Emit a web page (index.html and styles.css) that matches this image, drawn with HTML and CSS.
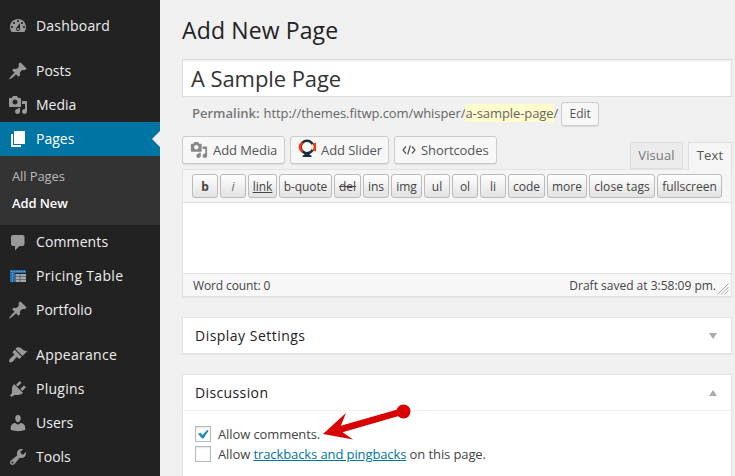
FILE: index.html
```html
<!DOCTYPE html>
<html lang="en">
<head>
<meta charset="utf-8">
<title>Add New Page</title>
<link rel="stylesheet" href="styles.css">
</head>
<body>
<div class="admin">
  <nav class="menu">
    <a class="item"><svg class="icon" viewBox="0 0 20 20"><path fill-rule="evenodd" d="M3.76 16h12.48c1.1-1.37 1.76-3.11 1.76-5 0-4.42-3.58-8-8-8s-8 3.58-8 8c0 1.89.66 3.63 1.76 5zM10 4c.55 0 1 .45 1 1s-.45 1-1 1-1-.45-1-1 .45-1 1-1zM6 6c.55 0 1 .45 1 1s-.45 1-1 1-1-.45-1-1 .45-1 1-1zm8 0c.55 0 1 .45 1 1s-.45 1-1 1-1-.45-1-1 .45-1 1-1zm-5.370 5.550L12 7v6c0 1.100-.9 2-2 2s-2-.9-2-2c0-.57.24-1.080.63-1.450zM4 10c.55 0 1 .45 1 1s-.45 1-1 1-1-.45-1-1 .45-1 1-1zm12 0c.55 0 1 .45 1 1s-.45 1-1 1-1-.45-1-1 .45-1 1-1zm-5 3c0-.55-.45-1-1-1s-1 .45-1 1 .45 1 1 1 1-.45 1-1z"/></svg><span class="t-dashboard">Dashboard</span></a>
    <a class="item group"><svg class="icon" viewBox="0 0 20 20"><path d="M10.44 3.02l1.82-1.82 6.36 6.35-1.83 1.82c-1.05-.68-2.48-.57-3.41.36l-.75.75c-.92.93-1.04 2.35-.35 3.41l-1.83 1.82-2.41-2.41-2.8 2.79c-.42.42-3.38 2.71-3.8 2.29s1.86-3.39 2.28-3.81l2.79-2.79L4.1 9.36l1.83-1.82c1.05.69 2.48.57 3.4-.36l.75-.75c.93-.92 1.05-2.35.36-3.41z"/></svg><span>Posts</span></a>
    <a class="item"><svg class="icon" viewBox="0 0 20 20"><path fill-rule="evenodd" d="M13 11V4c0-.55-.45-1-1-1h-1.67L9 1H5L3.67 3H2c-.55 0-1 .45-1 1v7c0 .55.45 1 1 1h10c.55 0 1-.45 1-1zM7 4.500c1.380 0 2.500 1.120 2.500 2.500S8.380 9.500 7 9.500 4.500 8.380 4.500 7 5.620 4.500 7 4.500zM14 6h5v10.500c0 1.380-1.120 2.500-2.500 2.500S14 17.880 14 16.500s1.120-2.500 2.500-2.500c.17 0 .34.02.5.05V9h-3V6zm-4 8.050V13h2v3.500c0 1.380-1.120 2.500-2.500 2.500S7 17.880 7 16.500 8.120 14 9.500 14c.17 0 .34.02.5.05z"/></svg><span>Media</span></a>
    <a class="item current"><svg class="icon" viewBox="0 0 20 20"><path d="M6 15V2h11v13H6zm-1 1h8v2H3V5h2v11z"/></svg><span>Pages</span></a>
    <div class="submenu"><a>All Pages</a><a class="active">Add New</a></div>
    <a class="item"><svg class="icon" viewBox="0 0 20 20"><path d="M5 3h9.500q2 0 2 2v7q0 2-2 2h-3L7 18.500V14H5q-2 0-2-2V5q0-2 2-2z"/></svg><span class="t-comments">Comments</span></a>
    <a class="item"><svg class="icon" viewBox="0 0 20 20"><path fill="#1f6fae" d="M2 4h16v3H7v9H2z"/><path fill="#a3a7ab" d="M7.500 8H18v8H7.500z"/><path stroke="#444c55" stroke-width=".6" fill="none" d="M12 8v8M8 10.500h10M8 13.500h10"/><path stroke="#8db9d8" stroke-width=".7" stroke-dasharray="1.500 1" fill="none" d="M3 5.500h15M4.500 7v9"/></svg><span class="t-pricing">Pricing Table</span></a>
    <a class="item"><svg class="icon" viewBox="0 0 20 20"><path d="M10.44 3.02l1.82-1.82 6.36 6.35-1.83 1.82c-1.05-.68-2.48-.57-3.41.36l-.75.75c-.92.93-1.04 2.35-.35 3.41l-1.83 1.82-2.41-2.41-2.8 2.79c-.42.42-3.38 2.71-3.8 2.29s1.86-3.39 2.28-3.81l2.79-2.79L4.1 9.36l1.83-1.82c1.05.69 2.48.57 3.4-.36l.75-.75c.93-.92 1.05-2.35.36-3.41z"/></svg><span>Portfolio</span></a>
    <a class="item group"><svg class="icon" viewBox="0 0 20 20"><path d="M14.48 11.06L7.41 3.99l1.5-1.5c.5-.56 2.3-.47 3.51.32 1.21.8 1.43 1.28 2.91 2.1 1.18.64 2.45 1.26 4.45.85zm-.71.71L6.7 4.7 4.93 6.47c-.39.39-.39 1.02 0 1.41l1.06 1.06c.39.39.39 1.03 0 1.42-.6.6-1.43 1.11-2.21 1.69-.35.26-.7.53-1.01.84C1.43 14.23.4 16.08 1.4 17.07c.99 1 2.84-.03 4.18-1.36.31-.31.58-.66.85-1.02.57-.78 1.08-1.61 1.69-2.21.39-.39 1.02-.39 1.41 0l1.06 1.06c.39.39 1.02.39 1.41 0z"/></svg><span class="t-appearance">Appearance</span></a>
    <a class="item"><svg class="icon" viewBox="0 0 20 20"><path d="M13.11 4.36L9.87 7.6 8 5.73l3.24-3.24c.35-.34 1.05-.2 1.56.32.52.51.66 1.21.31 1.55zm-8 1.77l.91-1.12 9.01 9.01-1.19.84c-.71.71-2.63 1.16-3.82 1.16H6.14L4.9 17.26c-.59.59-1.54.59-2.12 0-.59-.58-.59-1.53 0-2.12l1.24-1.24v-3.88c0-1.13.4-3.19 1.09-3.89zm7.26 3.97l3.24-3.24c.34-.35 1.04-.21 1.55.31.52.51.66 1.21.31 1.55l-3.24 3.25z"/></svg><span class="t-plugins">Plugins</span></a>
    <a class="item"><svg class="icon" viewBox="0 0 20 20"><path d="M10 9.25c-2.27 0-2.73-3.44-2.73-3.44C7 4.02 7.82 2 9.97 2c2.16 0 2.98 2.02 2.71 3.81 0 0-.41 3.44-2.68 3.44zm0 2.57L12.72 10c2.39 0 4.52 2.33 4.52 4.53v2.49s-3.65 1.13-7.24 1.13c-3.65 0-7.24-1.13-7.24-1.13v-2.49c0-2.25 1.94-4.48 4.47-4.48z"/></svg><span>Users</span></a>
    <a class="item"><svg class="icon" viewBox="0 0 20 20"><path fill-rule="evenodd" d="M16.68 9.77c-1.34 1.34-3.3 1.67-4.95.99l-5.41 6.52c-.99.99-2.59.99-3.58 0s-.99-2.59 0-3.57l6.52-5.42c-.68-1.65-.35-3.61.99-4.95 1.28-1.28 3.12-1.62 4.72-1.06l-2.89 2.89 2.82 2.82 2.86-2.87c.53 1.58.18 3.39-1.08 4.65zM3.81 16.21c.4.39 1.04.39 1.43 0 .4-.4.4-1.04 0-1.43-.39-.4-1.03-.4-1.43 0-.39.39-.39 1.03 0 1.43z"/></svg><span>Tools</span></a>
  </nav>
  <main class="content">
    <h1>Add New Page</h1>
    <div class="title-field"><span>A Sample Page</span></div>
    <div class="permalink"><b>Permalink:</b><span class="url">http://themes.fitwp.com/whisper/<mark>a-sample-page</mark>/</span><button class="edit">Edit</button></div>
    <div class="tools">
      <button class="media-btn"><svg class="mi" viewBox="0 0 20 20"><path fill="#888" fill-rule="evenodd" d="M13 11V4c0-.55-.45-1-1-1h-1.67L9 1H5L3.67 3H2c-.55 0-1 .45-1 1v7c0 .55.45 1 1 1h10c.55 0 1-.45 1-1zM7 4.500c1.38 0 2.500 1.12 2.500 2.500S8.380 9.500 7 9.500 4.500 8.380 4.500 7 5.620 4.500 7 4.500zM14 6h5v10.500c0 1.380-1.120 2.500-2.500 2.500S14 17.880 14 16.500s1.120-2.500 2.500-2.500c.17 0 .34.02.5.05V9h-3V6zm-4 8.050V13h2v3.500c0 1.380-1.120 2.500-2.500 2.500S7 17.880 7 16.500 8.120 14 9.500 14c.17 0 .34.02.5.05z"/></svg><span>Add Media</span></button>
      <button class="media-btn slider"><svg class="mi logo" viewBox="0 0 18 18"><circle cx="9" cy="8" r="6.300" fill="none" stroke="#1c2e3a" stroke-width="2.600"/><path fill="none" stroke="#f4370b" stroke-width="2.800" d="M4.500 3.500Q-.6 8 4.500 12.500"/><path fill="#f7f7f7" d="M13.500 5.500l3-.5v6l-3-.5z"/><path fill="#f4370b" d="M14.800 4.800L18 3.500v9l-3.200-1.300q1.700-3.200 0-6.400z"/><path fill="#1c2e3a" d="M6.500 13.500h5v2l2 1.200V18h-9v-1.300l2-1.200z"/></svg><span>Add Slider</span></button>
      <button class="media-btn short"><svg class="code" viewBox="0 0 14 12"><path fill="none" stroke="#555" stroke-width="1.200" d="M4 2.500L1 6l3 3.500M10 2.500L13 6l-3 3.500M8.300 1.500L5.700 10.500"/></svg><span>Shortcodes</span></button>
      <div class="tabs"><a class="tab visual"><span>Visual</span></a><a class="tab text"><span>Text</span></a></div>
    </div>
    <section class="editor">
      <div class="quicktags">
        <button class="w26"><b>b</b></button><button class="w26"><i>i</i></button><button class="w29"><u>link</u></button><button class="w53"><span class="t-quote">b-quote</span></button><button class="w27"><s>del</s></button><button class="w26">ins</button><button class="w31">img</button><button class="w26">ul</button><button class="w26">ol</button><button class="w26">li</button><button class="w37">code</button><button class="w40">more</button><button class="w66"><span class="t-close">close tags</span></button><button class="w65">fullscreen</button>
      </div>
      <div class="textarea"></div>
      <div class="status"><span class="t-count">Word count: 0</span><span class="saved">Draft saved at 3:58:09 pm.</span><svg class="grip" viewBox="0 0 12 12"><path fill="none" stroke="#aaa" d="M.5 11.500l11-11M4 11.500L11.500 4M7.500 11.500l4-4"/></svg></div>
    </section>
    <section class="box display"><h3><span class="t-display">Display Settings</span><svg viewBox="0 0 8 6"><path d="M0 0h8L4 6z"/></svg></h3></section>
    <section class="box discussion"><h3><span class="t-disc">Discussion</span><svg viewBox="0 0 8 6"><path d="M0 6h8L4 0z"/></svg></h3>
      <div class="inside">
        <label><span class="check"><svg viewBox="0 0 14 14"><path fill="#1e8cbe" d="M2 6.800L4.500 5.800l2 2.300L11 3l1.700.5L7.500 11.500H6z"/></svg></span><span class="t-allow">Allow comments.</span></label>
        <label><span class="check"></span><span class="t-track">Allow <a>trackbacks and pingbacks</a> on this page.</span></label>
      </div>
      <svg class="arrow" viewBox="0 0 90 40"><path fill="#d80000" d="M1 31L24 10 18.800 22.800 79 5.500l2 6.200L20.500 29.200 31 36.500z"/><circle fill="#d80000" cx="81.500" cy="8.500" r="7"/></svg>
    </section>
  </main>
</div>
</body>
</html>
```
FILE: styles.css
```css
* { box-sizing: border-box; }
body { margin: 0; background: #f0f0f0; color: #444; font: 13px/20px "Open Sans", sans-serif; overflow: hidden; }
button { font: inherit; padding: 0; margin: 0; color: #555; }
.admin { display: flex; width: 735px; height: 476px; overflow: hidden; }

.menu { flex: none; width: 160px; background: #222; padding-top: 9px; }
.item { display: flex; align-items: center; height: 34px; padding-left: 8px; color: #eee; font-size: 14px; position: relative; }
.item span { margin-left: 8px; white-space: nowrap; }
.item.group { margin-top: 11px; }
.icon { width: 20px; height: 20px; fill: #999; }
.current { background: #0074a2; color: #fff; }
.current .icon { fill: #fff; }
.current::after { content: ""; position: absolute; right: 0; top: 9px; border: 8px solid transparent; border-left: 0; border-right-color: #f0f0f0; }
.submenu { height: 69px; padding: 7px 12px; background: #333; color: #bbb; }
.submenu a { display: block; line-height: 27px; letter-spacing: -.1px; }
.submenu .active { color: #fff; font-weight: 600; }
.t-dashboard { letter-spacing: .2px; }
.t-comments { letter-spacing: .12px; }
.t-pricing { letter-spacing: .32px; }
.t-appearance { letter-spacing: .28px; }
.t-plugins { letter-spacing: .25px; }

.content { width: 550px; margin-left: 22px; }
h1 { margin: 16px 0 0; height: 43px; font-size: 23px; font-weight: 400; line-height: 29px; letter-spacing: .13px; color: #222; }
.title-field { height: 38px; padding: 0 8px; border: 1px solid #ddd; background: #fff; box-shadow: inset 0 1px 2px rgba(0,0,0,.07); font-size: 22px; line-height: 36px; letter-spacing: -.08px; color: #333; }
.permalink { display: flex; align-items: center; height: 33px; padding-left: 10px; color: #666; white-space: nowrap; }
.permalink b { font-weight: 600; color: #777; margin-right: 4px; }
.url { letter-spacing: -.08px; position: relative; top: -1px; }
.permalink b { position: relative; top: -1px; }
.permalink mark { background: #fffbcc; color: #666; }
.edit { width: 38px; height: 24px; margin-left: 3px; border: 1px solid #ccc; border-radius: 3px; background: #f7f7f7; box-shadow: 0 1px 0 rgba(0,0,0,.08); font-size: 12px; line-height: 20px; }
.tools { display: flex; height: 39px; padding-top: 6px; gap: 5px; }
.media-btn { display: flex; align-items: center; width: 103px; height: 28px; padding-left: 7px; border: 1px solid #ccc; border-radius: 3px; background: #f7f7f7; box-shadow: 0 1px 0 rgba(0,0,0,.08); white-space: nowrap; letter-spacing: -.08px; }
.media-btn.slider { width: 99px; }
.mi { width: 18px; height: 18px; margin-right: 5px; flex: none; }
.logo { position: relative; top: -2px; }
.code { width: 14px; height: 12px; margin-right: 5px; flex: none; }
.tabs { display: flex; gap: 5px; margin: 6px 0 -1px auto; }
.tab { height: 27px; border: 1px solid #dedede; background: #ebebeb; color: #777; font-size: 13px; letter-spacing: .1px; line-height: 25px; text-align: center; }
.visual { width: 53px; }
.text { width: 44px; height: 28px; border-bottom: 0; background: #f5f5f5; color: #555; position: relative; }

.editor { height: 128px; border: 1px solid #e2e2e2; background: #fff; box-shadow: 0 1px 1px rgba(0,0,0,.04); }
.quicktags { display: flex; gap: 2px; height: 33px; padding: 4px 0 0 9px; border-bottom: 1px solid #dedede; background: #f5f5f5; }
.quicktags button { height: 24px; border: 1px solid #bbb; border-radius: 3px; background: linear-gradient(#fff, #e2e2e2); color: #444; font-size: 12px; line-height: 20px; padding-top: 1px; white-space: nowrap; flex: none; }
.quicktags i { color: #666; }
.w26 { width: 26px; } .w27 { width: 27px; } .w29 { width: 29px; } .w31 { width: 31px; } .w37 { width: 37px; }
.w40 { width: 40px; } .w53 { width: 53px; } .w65 { width: 65px; } .w66 { width: 66px; }
.t-quote { letter-spacing: -.1px; }
.t-close { letter-spacing: .1px; }
.textarea { height: 70px; }
.status { display: flex; height: 23px; padding: 0 2px 0 10px; border-top: 1px solid #dedede; background: #f7f7f7; font-size: 12px; line-height: 23px; }
.t-count { letter-spacing: -.12px; }
.saved { margin-left: auto; }
.grip { width: 12px; height: 12px; margin: 9px 0 0 1px; }

.box { margin-top: 20px; border: 1px solid #e2e2e2; background: #fff; box-shadow: 0 1px 1px rgba(0,0,0,.04); position: relative; }
.box h3 { display: flex; align-items: center; justify-content: space-between; margin: 0; height: 35px; padding: 0 14px 0 12px; font-size: 14px; font-weight: 500; letter-spacing: .38px; color: #222; }
.t-display { letter-spacing: .48px; }
.box h3 svg { width: 8px; height: 6px; fill: #aaa; }
.discussion { height: 120px; }
.discussion h3 { height: 36px; border-bottom: 1px solid #eee; }
.inside { padding: 13px 12px; }
.inside label { display: flex; align-items: center; height: 20px; white-space: nowrap; }
.check { width: 16px; height: 16px; margin-right: 7px; border: 1px solid #b4b9be; background: #fff; box-shadow: inset 0 1px 2px rgba(0,0,0,.1); }
.check svg { display: block; width: 14px; height: 14px; }
.inside a { color: #0074a2; text-decoration: underline; }
.t-allow, .t-track { letter-spacing: -.1px; }
.arrow { position: absolute; left: 139px; top: 28px; width: 90px; height: 40px; }
```
